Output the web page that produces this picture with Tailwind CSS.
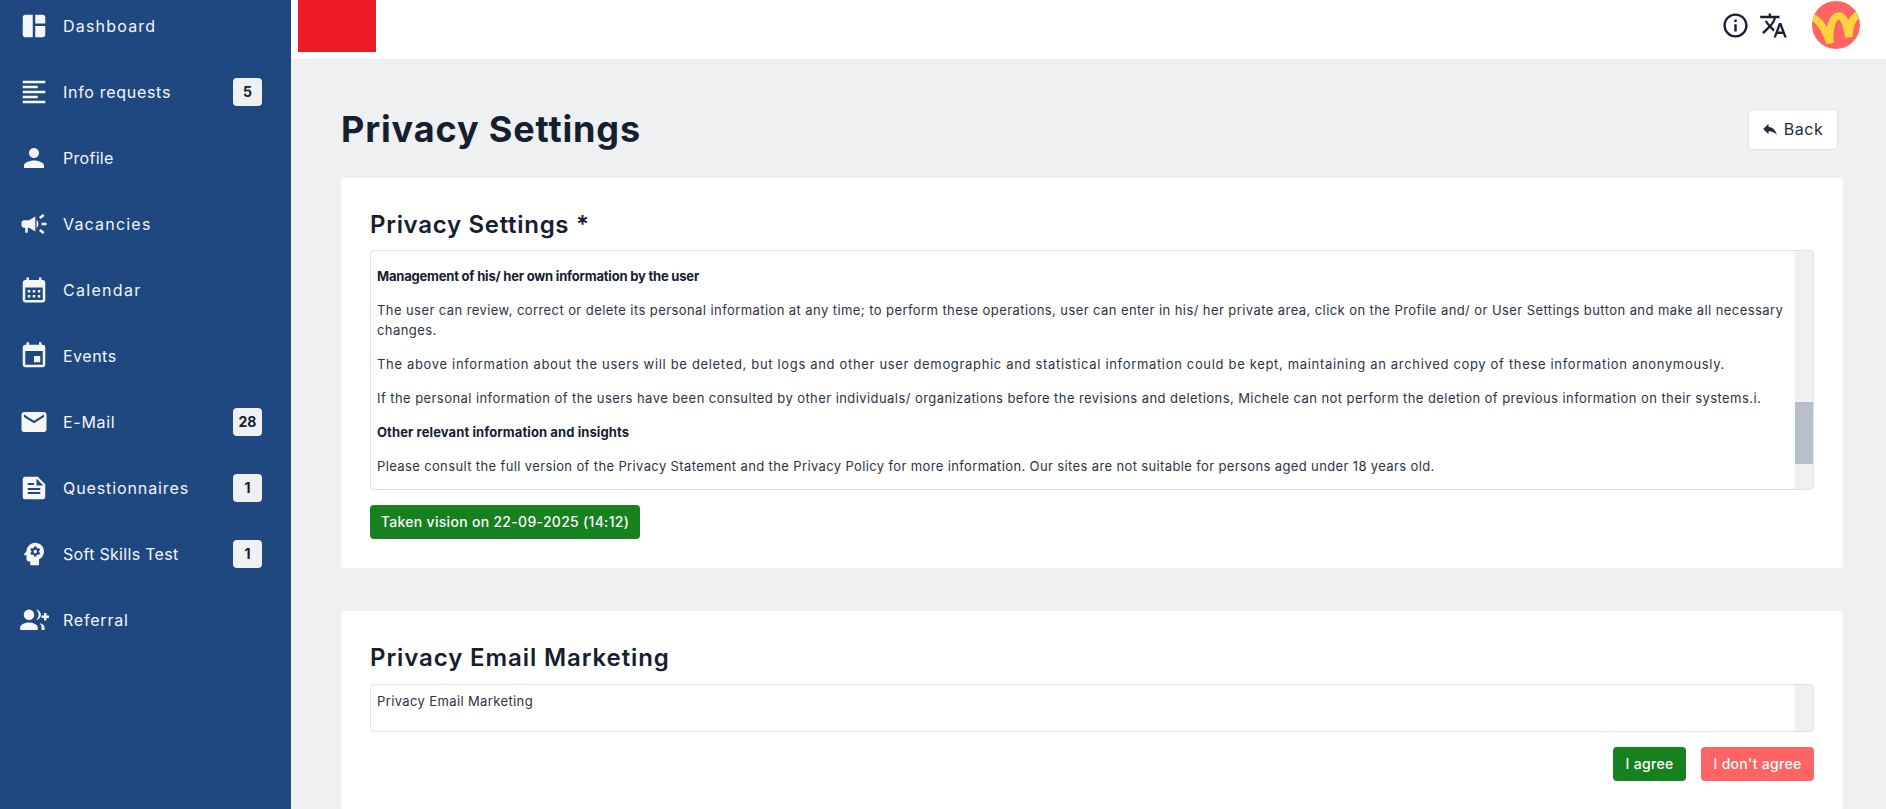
<!DOCTYPE html>
<html lang="en">
<head>
    <meta charset="UTF-8">
    <meta name="viewport" content="width=device-width, initial-scale=1.0">
    <title>Privacy Settings</title>
    <script src="https://cdn.jsdelivr.net/npm/@tailwindcss/browser@4"></script>
</head>
<body class="bg-[#eff0f2] h-screen overflow-hidden flex font-['Inter',sans-serif] text-[#14202f]">
    <aside class="w-[291px] shrink-0 bg-[#1f4880] text-[#f5f6f8] overflow-hidden">
        <nav class="-mt-[7px] text-base">
            <a class="flex items-center h-[66px] pl-[19px] pr-[29px]">
                <svg class="w-[30px] h-[30px] mr-[14px] shrink-0" viewBox="0 0 24 24" fill="currentColor"><path d="M11 21H5c-1.1 0-2-.9-2-2V5c0-1.1.9-2 2-2h6v18zM13 21h6c1.1 0 2-.9 2-2v-7h-8v9zM21 10V5c0-1.1-.9-2-2-2h-6v7h8z"/></svg>
                <span class="flex-1 tracking-[1.2px]">Dashboard</span>
            </a>
            <a class="flex items-center h-[66px] pl-[19px] pr-[29px]">
                <svg class="w-[30px] h-[30px] mr-[14px] shrink-0" viewBox="0 0 24 24" fill="currentColor"><path d="M15 15H3v2h12v-2zm0-8H3v2h12V7zM3 13h18v-2H3v2zm0 8h18v-2H3v2zM3 3v2h18V3H3z"/></svg>
                <span class="flex-1 tracking-[0.7px]">Info requests</span>
                <span class="w-[29px] h-[28px] rounded bg-[#eff0f2] text-[#14202f] text-sm font-bold flex items-center justify-center">5</span>
            </a>
            <a class="flex items-center h-[66px] pl-[19px] pr-[29px]">
                <svg class="w-[30px] h-[30px] mr-[14px] shrink-0" viewBox="0 0 24 24" fill="currentColor"><path d="M12 12c2.210 0 4-1.790 4-4s-1.790-4-4-4-4 1.790-4 4 1.790 4 4 4zm0 2c-2.670 0-8 1.340-8 4v2h16v-2c0-2.660-5.330-4-8-4z"/></svg>
                <span class="flex-1 tracking-[0.3px]">Profile</span>
            </a>
            <a class="flex items-center h-[66px] pl-[19px] pr-[29px]">
                <svg class="w-[30px] h-[30px] mr-[14px] shrink-0" viewBox="0 0 24 24" fill="currentColor"><path d="M18 11v2h4v-2h-4zM16 17.610c.96.71 2.210 1.650 3.200 2.390l1.200-1.600c-.99-.74-2.240-1.680-3.200-2.400l-1.200 1.610zM20.400 5.600 19.200 4c-.99.74-2.240 1.680-3.200 2.400L17.200 8c.96-.72 2.210-1.650 3.200-2.400zM4 9c-1.100 0-2 .9-2 2v2c0 1.100.9 2 2 2h1v4h2v-4h1l5 3V6L8 9H4zM15.500 12c0-1.330-.58-2.530-1.500-3.350v6.690c.92-.81 1.500-2.010 1.500-3.340z"/></svg>
                <span class="flex-1 tracking-[1.2px]">Vacancies</span>
            </a>
            <a class="flex items-center h-[66px] pl-[19px] pr-[29px]">
                <svg class="w-[30px] h-[30px] mr-[14px] shrink-0" viewBox="0 0 24 24" fill="currentColor"><path d="M19 4h-1V2h-2v2H8V2H6v2H5c-1.110 0-1.990.9-1.990 2L3 20c0 1.100.89 2 2 2h14c1.100 0 2-.9 2-2V6c0-1.100-.9-2-2-2zm0 16H5V10h14v10zM9 14H7v-2h2v2zm4 0h-2v-2h2v2zm4 0h-2v-2h2v2zm-8 4H7v-2h2v2zm4 0h-2v-2h2v2zm4 0h-2v-2h2v2z"/></svg>
                <span class="flex-1 tracking-[1.3px]">Calendar</span>
            </a>
            <a class="flex items-center h-[66px] pl-[19px] pr-[29px]">
                <svg class="w-[30px] h-[30px] mr-[14px] shrink-0" viewBox="0 0 24 24" fill="currentColor"><path d="M17 12h-5v5h5v-5zM16 1v2H8V1H6v2H5c-1.110 0-1.990.9-1.990 2L3 19c0 1.100.89 2 2 2h14c1.100 0 2-.9 2-2V5c0-1.100-.9-2-2-2h-1V1h-2zm3 18H5V8h14v11z"/></svg>
                <span class="flex-1 tracking-[0.5px]">Events</span>
            </a>
            <a class="flex items-center h-[66px] pl-[19px] pr-[29px]">
                <svg class="w-[30px] h-[30px] mr-[14px] shrink-0" viewBox="0 0 24 24" fill="currentColor"><path d="M20 4H4c-1.100 0-1.990.9-1.990 2L2 18c0 1.100.9 2 2 2h16c1.100 0 2-.9 2-2V6c0-1.100-.9-2-2-2zm0 4-8 5-8-5V6l8 5 8-5v2z"/></svg>
                <span class="flex-1 tracking-[0.7px]">E-Mail</span>
                <span class="w-[29px] h-[28px] rounded bg-[#eff0f2] text-[#14202f] text-sm font-bold flex items-center justify-center">28</span>
            </a>
            <a class="flex items-center h-[66px] pl-[19px] pr-[29px]">
                <svg class="w-[30px] h-[30px] mr-[14px] shrink-0" viewBox="0 0 24 24" fill="currentColor"><path fill-rule="evenodd" d="M5 3h10l6 6v10a2 2 0 0 1-2 2H5a2 2 0 0 1-2-2V5a2 2 0 0 1 2-2zm9 1.500V10h5.500L14 4.500zM7 12v1.600h10V12H7zm0 3.200v1.600h10v-1.600H7zM7 8v1.600h5V8H7z"/></svg>
                <span class="flex-1 tracking-[0.9px]">Questionnaires</span>
                <span class="w-[29px] h-[28px] rounded bg-[#eff0f2] text-[#14202f] text-sm font-bold flex items-center justify-center">1</span>
            </a>
            <a class="flex items-center h-[66px] pl-[19px] pr-[29px]">
                <svg class="w-[30px] h-[30px] mr-[14px] shrink-0" viewBox="0 0 24 24" fill="currentColor"><path d="M13 8.570c-.79 0-1.430.64-1.430 1.430s.64 1.430 1.430 1.430 1.430-.64 1.430-1.430-.64-1.430-1.430-1.430z"/><path d="M13 3C9.250 3 6.200 5.940 6.020 9.640L4.100 12.200c-.25.33-.01.8.4.8H6v3c0 1.100.9 2 2 2h1v3h7v-4.680c2.360-1.120 4-3.530 4-6.320 0-3.870-3.130-7-7-7zm3 7c0 .13-.01.26-.02.39l.83.66c.08.06.1.16.05.25l-.8 1.390c-.05.09-.16.12-.24.09l-.99-.4c-.21.16-.43.29-.67.39L14 13.830c-.01.1-.1.17-.2.17h-1.600c-.1 0-.18-.07-.2-.17l-.15-1.060c-.25-.1-.47-.23-.68-.39l-.99.4c-.09.03-.2 0-.25-.09l-.8-1.390c-.05-.08-.03-.19.05-.25l.84-.66c-.01-.13-.02-.26-.02-.39s.02-.27.04-.39l-.85-.66c-.08-.06-.1-.16-.05-.26l.8-1.380c.05-.09.15-.12.24-.09l1 .4c.2-.15.43-.29.67-.39L12 6.170c.02-.1.1-.17.2-.17h1.600c.1 0 .18.07.2.17l.15 1.060c.24.1.46.23.67.39l1-.4c.09-.03.2 0 .24.09l.8 1.380c.05.09.03.2-.05.26l-.85.66c.03.12.04.25.04.39z"/></svg>
                <span class="flex-1 tracking-[0.3px]">Soft Skills Test</span>
                <span class="w-[29px] h-[28px] rounded bg-[#eff0f2] text-[#14202f] text-sm font-bold flex items-center justify-center">1</span>
            </a>
            <a class="flex items-center h-[66px] pl-[19px] pr-[29px]">
                <svg class="w-[30px] h-[30px] mr-[14px] shrink-0 overflow-visible" viewBox="0 0 24 24" fill="currentColor"><path d="M8 12a4.200 4.200 0 1 0 0-8.400A4.200 4.200 0 0 0 8 12zM8 14c-2.700 0-7 1.300-7 4v2h14v-2c0-2.700-4.300-4-7-4zM13.500 3.600c1.300 1 2.200 2.500 2.200 4.200s-.9 3.200-2.200 4.200c2.200-.2 4-2 4-4.200s-1.800-4-4-4.200zM16.500 14.500c1 .9 1.500 2 1.500 3.500v2h2.500v-2c0-1.900-1.800-3.100-4-3.500zM20 6.400h2v2h2v2h-2v2h-2v-2h-2v-2h2z"/></svg>
                <span class="flex-1 tracking-[0.8px]">Referral</span>
            </a>
        </nav>
    </aside>

    <div class="flex-1 min-w-0 flex flex-col">
        <header class="h-[59px] bg-white shrink-0 flex items-start pl-[7px]">
            <div class="w-[78px] h-[52px] bg-[#ed1c24]"></div>
            <div class="ml-auto flex items-center h-[50px] pr-[26px]">
                <svg class="w-[29px] h-[29px] text-[#14202f]" viewBox="0 0 24 24" fill="currentColor"><path d="M11 7h2v2h-2zm0 4h2v6h-2zm1-9C6.480 2 2 6.480 2 12s4.480 10 10 10 10-4.480 10-10S17.520 2 12 2zm0 18c-4.410 0-8-3.590-8-8s3.590-8 8-8 8 3.590 8 8-3.590 8-8 8z"/></svg>
                <svg class="w-[29px] h-[29px] ml-[9px] text-[#14202f]" viewBox="0 0 24 24" fill="currentColor"><path d="m12.870 15.070-2.540-2.510.03-.03c1.740-1.940 2.980-4.170 3.710-6.530H17V4h-7V2H8v2H1v1.990h11.170C11.500 7.920 10.440 9.750 9 11.350 8.070 10.320 7.300 9.190 6.690 8h-2c.73 1.630 1.730 3.170 2.980 4.560l-5.090 5.020L4 19l5-5 3.110 3.110.76-2.040zM18.500 10h-2L12 22h2l1.120-3h4.750L21 22h2l-4.500-12zm-2.620 7 1.620-4.330L19.120 17h-3.240z"/></svg>
                <svg class="w-12 h-12 ml-[24px]" viewBox="0 0 48 48" fill="none">
                    <clipPath id="avatarClip"><circle cx="24" cy="24" r="24"/></clipPath>
                    <circle cx="24" cy="24" r="24" fill="#ff6464"/>
                    <path clip-path="url(#avatarClip)" d="M1 17C8 19 13 28 18 42C17 32 19 15 27 15C33 15 35 26 37 36C37 26 40 17 47 13" stroke="#ffd23f" stroke-width="7.500"/>
                </svg>
            </div>
        </header>

        <main class="flex-1 min-h-0 overflow-hidden pt-[43px] pl-[50px] pr-[43px]">
            <div class="flex items-center justify-between mb-[22px]">
                <h1 class="text-[36px] leading-[54px] font-bold tracking-[0.87px]">Privacy Settings</h1>
                <button class="h-[41px] w-[90px] mr-[5px] bg-white border border-[#dee1e6] rounded flex items-center justify-center text-base text-[#222b3a] tracking-[0.5px]">
                    <svg class="w-[18px] h-[18px] mr-[5px] -ml-[2px]" viewBox="0 0 24 24" fill="currentColor"><path d="M10 9V5l-7 7 7 7v-4.100c5 0 8.500 1.600 11 5.100-1-5-4-10-11-11z"/></svg>
                    Back
                </button>
            </div>

            <section class="bg-white rounded pt-[29px] px-[29px] pb-[29px] mb-[43px]">
                <h2 class="text-2xl leading-9 font-semibold mb-[7px] tracking-[0.7px]">Privacy Settings *</h2>
                <div class="h-[240px] border border-[#dee1e6] rounded flex overflow-hidden">
                    <div class="flex-1 min-w-0 px-[6px] pt-[15px] text-[13px] leading-[20px] text-[#2b3442] space-y-[14px]">
                        <p class="font-bold text-[#14202f] tracking-[-0.2px]">Management of his/ her own information by the user</p>
                        <p class="tracking-[0.42px]">The user can review, correct or delete its personal information at any time; to perform these operations, user can enter in his/ her private area, click on the Profile and/ or User Settings button and make all necessary changes.</p>
                        <p class="tracking-[0.67px]">The above information about the users will be deleted, but logs and other user demographic and statistical information could be kept, maintaining an archived copy of these information anonymously.</p>
                        <p class="tracking-[0.43px]">If the personal information of the users have been consulted by other individuals/ organizations before the revisions and deletions, Michele can not perform the deletion of previous information on their systems.i.</p>
                        <p class="font-bold text-[#14202f] tracking-[0.1px]">Other relevant information and insights</p>
                        <p class="tracking-[0.37px]">Please consult the full version of the Privacy Statement and the Privacy Policy for more information. Our sites are not suitable for persons aged under 18 years old.</p>
                    </div>
                    <div class="w-[18px] shrink-0 bg-[#eff0f2] pt-[151px]">
                        <div class="h-[62px] bg-[#b6bfc9]"></div>
                    </div>
                </div>
                <div class="mt-[15px]">
                    <span class="inline-flex items-center justify-center w-[270px] h-[34px] bg-[#17811f] text-white text-sm font-medium rounded tracking-[0.3px]">Taken vision on 22-09-2025 (14:12)</span>
                </div>
            </section>

            <section class="bg-white rounded pt-[29px] px-[29px] pb-[29px]">
                <h2 class="text-2xl leading-9 font-semibold mb-[8px] tracking-[0.9px]">Privacy Email Marketing</h2>
                <div class="h-[48px] border border-[#dee1e6] rounded flex overflow-hidden">
                    <div class="flex-1 min-w-0 px-[6px] pt-[6px] text-[13px] leading-[20px] text-[#2b3442] tracking-[0.38px]">
                        <p>Privacy Email Marketing</p>
                    </div>
                    <div class="w-[18px] shrink-0 bg-[#eff0f2]"></div>
                </div>
                <div class="flex justify-end gap-[15px] mt-[15px]">
                    <button class="w-[73px] h-[34px] bg-[#17811f] text-white text-sm font-medium rounded tracking-[0.3px]">I agree</button>
                    <button class="w-[113px] h-[34px] bg-[#ff6464] text-white text-sm font-medium rounded tracking-[0.3px]">I don't agree</button>
                </div>
            </section>
        </main>
    </div>
</body>
</html>
